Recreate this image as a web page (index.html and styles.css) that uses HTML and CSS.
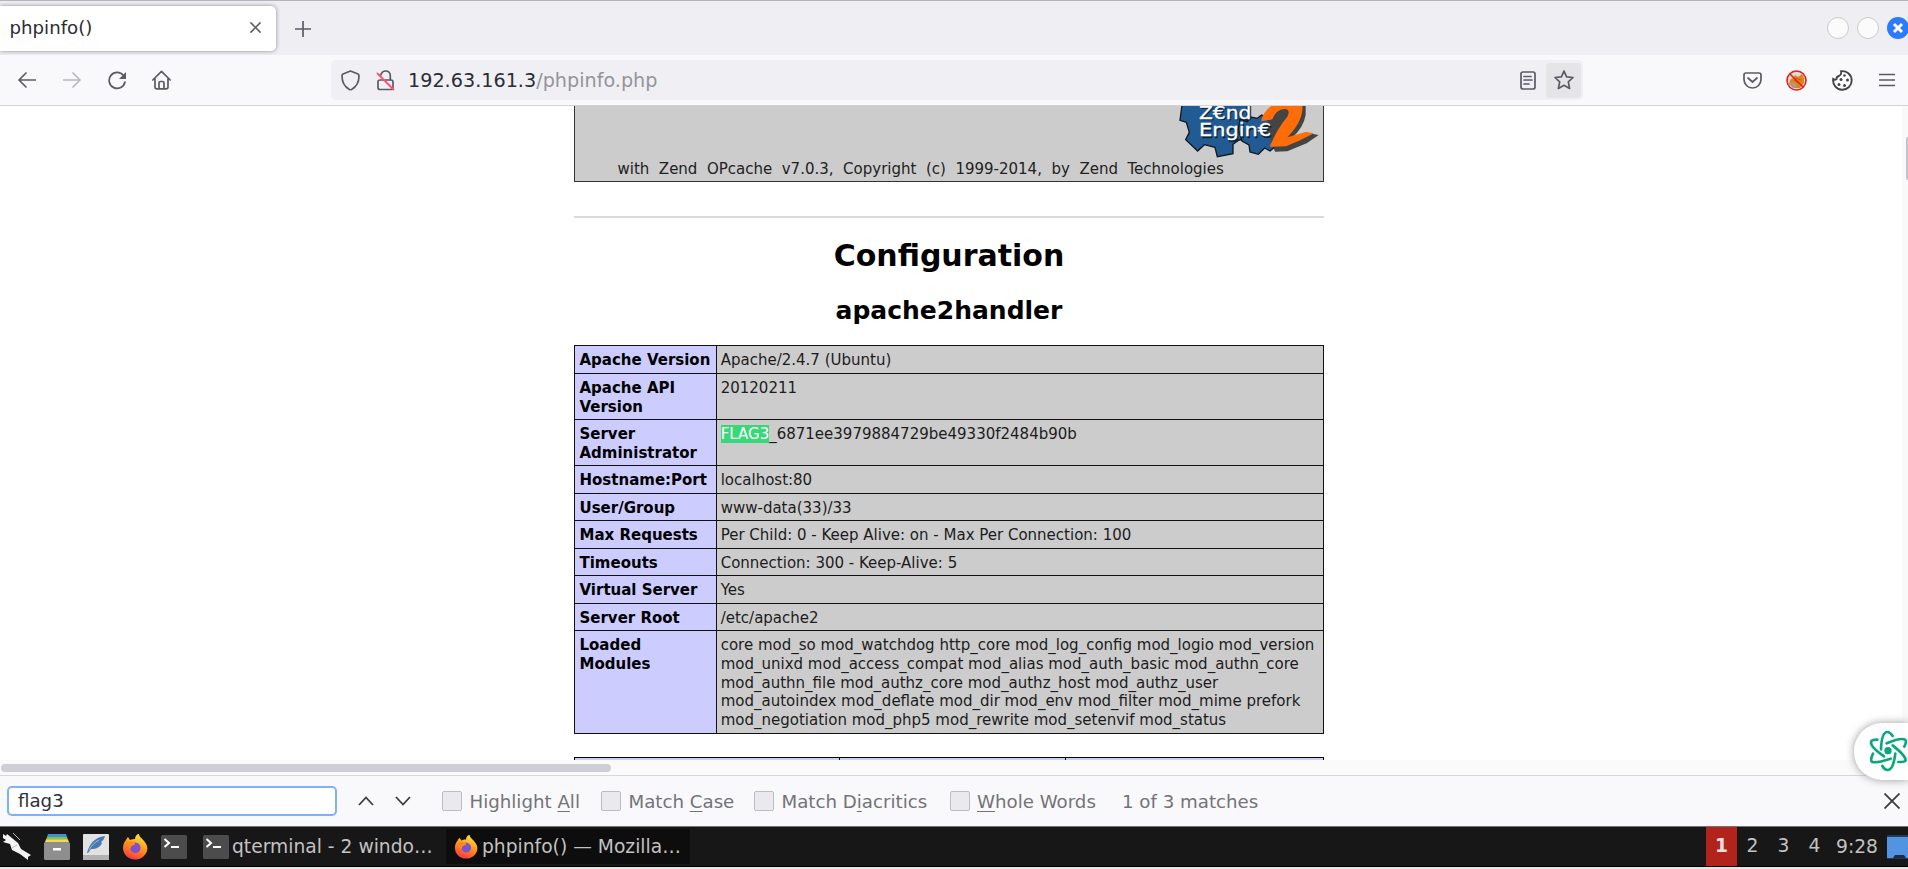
FILE: index.html
```html
<!DOCTYPE html>
<html lang="en">
<head>
<meta charset="utf-8">
<title>phpinfo()</title>
<link rel="stylesheet" href="styles.css">
</head>
<body>
<svg class="defs" width="0" height="0">
  <defs>
    <linearGradient id="flame" x1="0.7" y1="0" x2="0.3" y2="1">
      <stop offset="0" stop-color="#ffe83a"/><stop offset=".45" stop-color="#ff9a1c"/><stop offset=".8" stop-color="#ff5a2c"/><stop offset="1" stop-color="#f0305e"/>
    </linearGradient>
    <symbol id="firefox" viewBox="0 0 26 27">
      <path d="M4 7C5 5 6 4 6 4L8 7C10 6 12 6 13 6C13 3 15 1 17 1C17 4 20 5 22 8C25 11 26 15 25 18C23 24 18 26.500 13 26.500C6 26.500 1 21 1 15C1 12 2 9 4 7Z" fill="url(#flame)"/>
      <path d="M8 14C8 12 11 11 13 11.500L12 9.500C16 9 19 12 18.500 15.500C18 19 15 20.500 12.500 20C9.500 19.500 8 17 8 14Z" fill="#7d52d0"/>
      <path d="M4 8C6 9 9 8 12 9.500C14 11 12 12.500 9.500 13L8 16C5 14 4 11 4 8Z" fill="#ff8a1c"/>
    </symbol>
    <symbol id="terminal" viewBox="0 0 26 24">
      <rect width="26" height="24" rx="1.500" fill="#4c4c4c"/>
      <path d="M3.500 4L8 8L3.500 12" fill="none" stroke="#fff" stroke-width="2"/>
      <rect x="10" y="11" width="8" height="2" fill="#fff"/>
    </symbol>
  </defs>
</svg>

<header class="tabs">
  <div class="tab"><span>phpinfo()</span>
    <svg width="11" height="11" viewBox="0 0 12 12"><path class="ln" d="M1 1L11 11M11 1L1 11"/></svg>
  </div>
  <svg class="plus" width="16" height="16" viewBox="0 0 16 16"><path class="ln" d="M8 .5V15.500M.5 8H15.500"/></svg>
  <div class="window-buttons">
    <i></i><i></i>
    <svg width="22" height="22" viewBox="0 0 22 22"><circle cx="11" cy="11" r="11" fill="#2a7bfd"/><path d="M7 7L15 15M15 7L7 15" stroke="#fff" stroke-width="3"/></svg>
  </div>
</header>

<nav class="toolbar">
  <svg class="back" width="18" height="16" viewBox="0 0 18 16"><path class="ln" d="M17.500 8H1M8 1L1 8L8 15"/></svg>
  <svg class="forward" width="18" height="16" viewBox="0 0 18 16"><path class="ln" d="M.5 8H17M10 1L17 8L10 15"/></svg>
  <svg class="reload" width="19" height="19" viewBox="0 0 19 19"><path class="ln" d="M15.500 4.500A8 8 0 1 0 17 11"/><path d="M18 1V8H11Z" fill="#5b5b66"/></svg>
  <svg class="home" width="19" height="20" viewBox="0 0 19 20"><path class="ln" d="M.8 10L9.500 1.300L18.200 10M3 8.500V17Q3 18.800 5 18.800H14Q16 18.800 16 17V8.500M7 18.500V13Q7 11.500 8.500 11.500H10.500Q12 11.500 12 13V18.500"/></svg>
  <div class="urlbar">
    <svg class="shield" width="19" height="21" viewBox="0 0 19 21"><path class="ln" d="M9.500 1L17 4Q18 4.500 18 6C18 12 15 17 10.500 19.500Q9.500 20 8.500 19.500C4 17 1 12 1 6Q1 4.500 2 4Z"/></svg>
    <svg class="lock" width="19" height="21" viewBox="0 0 19 21"><path class="ln" d="M4.500 5.500C5.500 2.500 7 1 9.500 1C12.500 1 14.300 3 14.300 6V10"/><rect class="ln" x="2" y="10" width="15" height="9.500" rx="2"/><path d="M1 3L18 20" stroke="#ff4f73" stroke-width="1.800"/></svg>
    <p class="url">192.63.161.3<span>/phpinfo.php</span></p>
    <svg class="reader" width="16" height="19" viewBox="0 0 16 19"><rect class="ln" x="1" y="1" width="14" height="17" rx="2"/><path class="ln" d="M4 5.500H11M4 9H12M4 13H9"/></svg>
    <div class="star"><svg width="20" height="20" viewBox="0 0 20 20"><path class="ln" d="M10 1L12.600 6.800L19 7.500L14.300 11.900L15.600 18.500L10 15.300L4.400 18.500L5.700 11.900L1 7.500L7.400 6.800Z"/></svg></div>
  </div>
  <svg class="pocket" width="19" height="17" viewBox="0 0 19 17"><path class="ln" d="M3 1H16Q18 1 18 3V7.500A8.500 8.500 0 0 1 1 7.500V3Q1 1 3 1Z"/><path class="ln" d="M5 6L9.500 10L14 6"/></svg>
  <svg class="nofox" width="21" height="21" viewBox="0 0 21 21"><circle cx="10.500" cy="10.500" r="9.500" fill="#e7dad6"/><path d="M4 11C4 8 7 9 8 7L9 5L12 7L16 4L18 8V13L14 18H7L3 14Z" fill="#e08418"/><path d="M3 14L7 12L11 15L9 18Z" fill="#a99"/><path d="M10 8L15 10M8 10L12 13" stroke="#bd5c13"/><circle cx="10.500" cy="10.500" r="9.500" fill="none" stroke="#d92323" stroke-width="1.600"/><path d="M4 4L17 17" stroke="#d92323" stroke-width="1.600"/></svg>
  <svg class="cookie" width="21" height="21" viewBox="0 0 21 21"><path d="M9 1.200A9.300 9.300 0 1 1 1.200 9Q3 10.500 4.500 9Q4.500 6.500 7 6Q10 4.500 9 1.200Z" fill="#fff" stroke="#454549" stroke-width="1.900"/><g fill="#454549"><circle cx="12.500" cy="5.500" r="1.300"/><circle cx="9" cy="9.500" r="1.500"/><circle cx="15.500" cy="10" r="1.500"/><circle cx="7" cy="14.500" r="1.500"/><circle cx="12.500" cy="15.500" r="1.500"/></g></svg>
  <svg class="menu" width="16" height="14" viewBox="0 0 16 14"><path class="ln" d="M0 1.500H16M0 7H16M0 12.500H16"/></svg>
</nav>

<main class="viewport">
  <div class="page">
    <section class="zend">
      <svg width="145" height="54" viewBox="45 33 435 162">
        <path d="M66 30L60 76L79 82L88 112L77 134L113 168L133 149L165 157L172 185L219 176V148L237 135L262 132V30Z" fill="#225b93" stroke="#111820" stroke-width="4"/>
        <path d="M240 72L262 80L272 66L292 70L305 60L330 72L360 90L352 150L330 168L314 159L295 178L270 171L267 150L246 138L235 105Z" fill="#225b93" stroke="#111820" stroke-width="4"/>
        <path d="M318 92Q327 60 356 42L385 25H437V60Q430 100 395 129L440 113L476 120L440 145L382 169L345 170Z" fill="#444"/>
        <path d="M303 79Q310 48 338 30H427Q432 75 382 127L437 111L462 115L417 137L378 154L329 155Q352 100 382 65Q393 43 374 42Q348 43 337 73Z" fill="#ff6d08"/>
        <g class="logo-shadow"><text x="121" y="76" textLength="157" lengthAdjust="spacingAndGlyphs">Z€nd</text><text x="121" y="128" textLength="216" lengthAdjust="spacingAndGlyphs">Engin€</text></g>
        <g class="logo-text"><text x="117" y="72" textLength="157" lengthAdjust="spacingAndGlyphs">Z€nd</text><text x="117" y="124" textLength="216" lengthAdjust="spacingAndGlyphs">Engin€</text></g>
      </svg>
      <p>with  Zend  OPcache  v7.0.3,  Copyright  (c)  1999-2014,  by  Zend  Technologies</p>
    </section>
    <hr>
    <h1>Configuration</h1>
    <h2>apache2handler</h2>
    <div class="info">
      <b>Apache Version</b><p>Apache/2.4.7 (Ubuntu)</p>
      <b>Apache API<br>Version</b><p>20120211</p>
      <b>Server<br>Administrator</b><p><mark>FLAG3</mark>_6871ee3979884729be49330f2484b90b</p>
      <b>Hostname:Port</b><p>localhost:80</p>
      <b>User/Group</b><p>www-data(33)/33</p>
      <b>Max Requests</b><p>Per Child: 0 - Keep Alive: on - Max Per Connection: 100</p>
      <b>Timeouts</b><p>Connection: 300 - Keep-Alive: 5</p>
      <b>Virtual Server</b><p>Yes</p>
      <b>Server Root</b><p>/etc/apache2</p>
      <b>Loaded<br>Modules</b><p>core mod_so mod_watchdog http_core mod_log_config mod_logio mod_version<br>mod_unixd mod_access_compat mod_alias mod_auth_basic mod_authn_core<br>mod_authn_file mod_authz_core mod_authz_host mod_authz_user<br>mod_autoindex mod_deflate mod_dir mod_env mod_filter mod_mime prefork<br>mod_negotiation mod_php5 mod_rewrite mod_setenvif mod_status</p>
    </div>
    <div class="next-table"><i></i><i></i><i></i></div>
  </div>
  <div class="vscroll"><div></div></div>
</main>
<div class="hscroll"><div></div></div>

<div class="widget">
  <svg width="40" height="44" viewBox="624 88 120 132">
    <g fill="none" stroke="#0aa67f" stroke-width="8" stroke-linecap="round"><path d="M663 149Q665 97 682 97Q690 97 698 109"/><path d="M667 199Q674 211 683 211Q700 211 706 162"/><path d="M680 131Q723 113 735 120Q741 124 733 141"/><path d="M698 137Q737 168 737 182Q736 188 715 187"/><path d="M639 162Q629 182 637 187Q649 191 692 177"/><path d="M652 120Q633 120 633 128Q632 142 672 170"/></g>
    <circle cx="684" cy="153" r="11" fill="#0aa67f"/>
  </svg>
</div>

<footer class="findbar">
  <div class="find-input">flag3</div>
  <svg class="up" width="16" height="10" viewBox="0 0 16 10"><path class="dk" d="M1 9L8 1.500L15 9"/></svg>
  <svg class="down" width="16" height="10" viewBox="0 0 16 10"><path class="dk" d="M1 1L8 8.500L15 1"/></svg>
  <div class="check c1"><i></i><span>Highlight <u>A</u>ll</span></div>
  <div class="check c2"><i></i><span>Match <u>C</u>ase</span></div>
  <div class="check c3"><i></i><span>Match D<u>i</u>acritics</span></div>
  <div class="check c4"><i></i><span><u>W</u>hole Words</span></div>
  <span class="matches">1 of 3 matches</span>
  <svg class="close" width="16" height="16" viewBox="0 0 16 16"><path class="dk" d="M.5 .5L15.500 15.500M15.500 .5L.5 15.500"/></svg>
</footer>

<div class="taskbar">
  <svg class="kali" width="28" height="27" viewBox="0 0 28 27"><path d="M0 1L3 3L4 1L15 10L18 16L28 22L25 24V27L17 21L9 17L7 11L0 9L3 7L0 5Z" fill="#f4f4f4"/><path d="M10 0L17 7M14 12L9 15" stroke="#bbb"/></svg>
  <svg class="files" width="26" height="26" viewBox="0 0 26 26"><path d="M4 0H22L23 3H3Z" fill="#4b8bd6"/><path d="M3 3H23L24 6H2Z" fill="#78c94b"/><path d="M2 5.500H24L25 8H1Z" fill="#ffd257"/><rect y="8" width="26" height="18" rx="1.500" fill="#8e8e8e"/><rect x="9" y="14" width="8" height="2.500" fill="#fff"/></svg>
  <svg class="pad" width="26" height="26" viewBox="0 0 26 26"><rect width="26" height="26" rx="1" fill="#e2e2e2"/><rect y="21" width="26" height="5" fill="#b2b2b2"/><path d="M4 19C6 10 12 3 22 2C21 5 20 7 18 8L19 9C17 13 14 15 8 15L5 19Z" fill="#4779b3"/><path d="M6 16C8 12 12 8 16 6" stroke="#9dbbdd" fill="none"/></svg>
  <svg class="fx" width="26" height="27"><use href="#firefox"/></svg>
  <svg class="term" width="26" height="24"><use href="#terminal"/></svg>
  <div class="task t-term"><svg width="26" height="24"><use href="#terminal"/></svg><span>qterminal - 2 windo…</span></div>
  <div class="task active"><svg width="24" height="25"><use href="#firefox"/></svg><span>phpinfo() — Mozilla…</span></div>
  <div class="workspaces"><b>1</b><span>2</span><span>3</span><span>4</span></div>
  <span class="clock">9:28</span>
  <svg class="tray" width="21" height="24" viewBox="0 0 21 24"><rect width="21" height="24" fill="#233b58"/><rect y="2" width="21" height="21" fill="#5294e2"/><path d="M6 23L8 20H17L19 23Z" fill="#1b2e45"/></svg>
</div>
<div class="edge"></div>
</body>
</html>
```
FILE: styles.css
```css
* { box-sizing: border-box; }
body { margin: 0; width: 1908px; height: 869px; overflow: hidden; display: flex; flex-direction: column; background: #fff; font-family: "DejaVu Sans", sans-serif; position: relative; color: #2c2c34; }
p, h1, h2 { margin: 0; }
svg { display: block; flex: none; }
.defs { position: absolute; }
.ln { fill: none; stroke: #5b5b66; stroke-width: 1.7; stroke-linejoin: round; stroke-linecap: round; }
.dk { fill: none; stroke: #3c3c40; stroke-width: 1.8; }

.tabs { height: 55px; flex: none; background: #efeef3; border-top: 1px solid #b4b3b9; display: flex; align-items: center; }
.tab { width: 276px; height: 45px; background: #fff; border-radius: 0 5px 5px 0; box-shadow: 0 0 4px #8b8b99; display: flex; align-items: center; justify-content: space-between; padding: 0 15px 2px 9.500px; font-size: 18.2px; }
.plus { margin-left: 19px; margin-top: 1px; }
.window-buttons { display: flex; gap: 8px; margin-left: auto; margin-right: -1px; }
.window-buttons i { width: 22px; height: 22px; border-radius: 50%; background: #fbfbfb; border: 1px solid #cbcbc8; }

.toolbar { height: 51px; flex: none; background: #f9f9fb; border-bottom: 1px solid #d2d2d6; display: flex; align-items: center; }
.back { margin-left: 18px; }
.forward { margin-left: 27px; opacity: .4; }
.reload { margin-left: 27px; }
.home { margin-left: 25px; }
.urlbar { margin-left: 160px; width: 1252px; height: 40px; background: #f0f0f4; border-radius: 5px; display: flex; align-items: center; }
.shield { margin-left: 10px; }
.lock { margin-left: 16px; }
.url { margin-left: 13px; font-size: 19.2px; }
.url span { color: #94949a; }
.reader { margin-left: auto; }
.star { width: 35px; height: 35px; margin: 0 2px 0 10px; border-radius: 4px; background: #e5e5e8; display: grid; place-items: center; }
.pocket { margin-left: 160px; }
.nofox { margin-left: 24px; }
.cookie { margin-left: 25px; }
.menu { margin-left: 26px; }

.viewport { height: 654px; flex: none; display: flex; overflow: hidden; }
.page { width: 750px; margin-left: 574px; color: #000; font-size: 15px; line-height: 18.75px; }
.zend { height: 76px; background: #ccc; border: 1px solid #333; border-top: 0; display: flex; flex-direction: column; align-items: flex-end; padding-right: 3px; color: #222; }
.zend p { align-self: flex-start; margin-left: 42.500px; white-space: pre; }
.logo-text, .logo-shadow { font: 54px "DejaVu Sans", sans-serif; fill: #fff; stroke: #fff; stroke-width: 1px; }
.logo-shadow { fill: #102438; stroke: #102438; }
hr { height: 2px; border: 0; background: #dadada; margin: 34px 0 0; }
h1 { text-align: center; font-size: 30px; line-height: 38px; margin-top: 19px; }
h2 { text-align: center; font-size: 25px; line-height: 32px; margin-top: 20px; }
.info { margin-top: 18px; display: grid; grid-template-columns: 142px 607px; grid-template-rows: 28px 46px 46px 28px 27px 28px 27px 28px 27px 103px; border: solid #111; border-width: 1px 0 0 1px; background: #ccc; color: #1c1c1c; }
.info > * { border: solid #111; border-width: 0 1px 1px 0; padding: 5px 0 0 3.700px; white-space: nowrap; }
.info b { background: #ccf; color: #000; padding-left: 4.500px; }
mark { background: #38d878; color: #fff; }
.next-table { height: 10px; margin-top: 23px; display: grid; grid-template-columns: 265px 226px 258px; background: #ccf; border-top: 1px solid #000; border-left: 1px solid #000; }
.next-table i { border-right: 1px solid #000; }
.vscroll { margin-left: auto; width: 6px; background: #f9f9fa; padding: 31px 0 0 4px; }
.vscroll div { height: 43px; background: #c5c5c9; border-radius: 4px 0 0 4px; }
.hscroll { height: 16px; flex: none; background: #fafafa; border-bottom: 1px solid #d7d7da; padding: 4px 0 0 1px; }
.hscroll div { width: 610px; height: 8px; border-radius: 4px; background: #cecfd4; }

.widget { position: absolute; left: 1854px; top: 723px; width: 54px; height: 57px; border-radius: 28px 0 0 28px; background: #fff; box-shadow: 0 0 8px #999; padding: 6px 0 0 14px; }

.findbar { height: 50px; flex: none; background: #f9f9fb; display: flex; align-items: center; font-size: 18.2px; color: #737378; }
.find-input { margin-left: 7px; width: 330px; height: 30px; border: 2px solid #80b1f2; border-radius: 5px; background: #fff; color: #303036; padding-left: 9px; line-height: 26px; }
.up { margin-left: 21px; }
.down { margin-left: 21px; }
.check { display: flex; align-items: center; gap: 7.500px; white-space: nowrap; flex: none; }
.check i { width: 20px; height: 20px; border: 1px solid #bdbdc1; border-radius: 2px; background: #eae9ee; }
.c1 { margin-left: 31px; width: 159px; }
.c2 { width: 153px; }
.c3 { width: 195.500px; }
.c4 { width: 172.500px; }
u { text-underline-offset: 3px; text-decoration-thickness: 1px; }
.close { margin-left: auto; margin-right: 8px; }

.taskbar { height: 40px; flex: none; background: #171717; border-top: 1px solid #737373; display: flex; align-items: center; font-size: 18.7px; color: #c2c2c2; white-space: nowrap; }
.kali { margin-left: 3px; }
.files { margin-left: 13px; }
.pad { margin-left: 13px; }
.fx { margin-left: 13px; }
.term { margin-left: 13px; }
.task { display: flex; align-items: center; gap: 3px; }
.t-term { margin-left: 16px; width: 243px; }
.active { background: #0d0d0d; width: 244px; height: 35px; padding-left: 8px; gap: 4px; }
.workspaces { margin-left: auto; display: grid; grid-template-columns: repeat(4, 31px); text-align: center; line-height: 38px; align-self: stretch; }
.workspaces b { background: #b2231c; color: #e8e0e0; }
.clock { margin-left: 6px; width: 51px; }
.edge { height: 3px; background: #e5e5e5; border-top: 1px solid #000; }
```
